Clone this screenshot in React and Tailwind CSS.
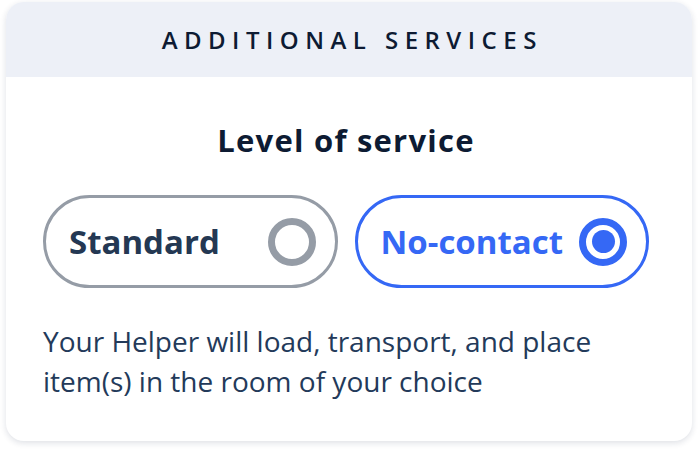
import { useState } from 'react';

const options = [
  { id: 'standard', label: 'Standard' },
  { id: 'no-contact', label: 'No-contact' },
];

export default function App() {
  const [level, setLevel] = useState('no-contact');

  return (
    <div className="min-h-screen bg-white pl-[6px] pt-[2px]" style={{ fontFamily: '"Open Sans", Lato, sans-serif' }}>
      <div className="w-[686px] h-[439px] rounded-[18px] bg-white shadow-[0_2px_6px_rgba(20,35,70,0.14)] overflow-hidden">
        <div className="h-[75px] bg-[#edf0f7] flex items-center justify-center">
          <h3 className="text-[24px] font-semibold tracking-[0.27em] text-[#0d1b33] pl-[0.27em]">
            ADDITIONAL SERVICES
          </h3>
        </div>

        <div className="pl-[37px] pr-[43px]">
          <h2 className="mt-[45px] text-center text-[31px] leading-[36px] font-bold tracking-[0.04em] text-[#0d1b33]">
            Level of service
          </h2>

          <div className="mt-[37px] grid grid-cols-2 gap-[17px]">
            {options.map(opt => {
              const active = level === opt.id;
              return (
                <button
                  key={opt.id}
                  onClick={() => setLevel(opt.id)}
                  className={`h-[93px] rounded-full border-[3px] flex items-center justify-between pl-[23px] pr-[19px]
                    ${active ? 'border-[#3568f5] text-[#3568f5]' : 'border-[#959ca6] text-[#243853]'}`}
                >
                  <span className="text-[33px] font-bold">{opt.label}</span>
                  {active ? (
                    <span className="w-12 h-12 rounded-full border-[7px] border-[#3568f5] flex items-center justify-center">
                      <span className="w-[23px] h-[23px] rounded-full bg-[#3568f5]"></span>
                    </span>
                  ) : (
                    <span className="w-12 h-12 rounded-full border-[7px] border-[#959ca6]"></span>
                  )}
                </button>
              );
            })}
          </div>

          <p className="mt-[33px] text-[28px] leading-[40px] text-[#233a5a]">
            Your Helper will load, transport, and place item(s) in the room of your choice
          </p>
        </div>
      </div>
    </div>
  );
}
